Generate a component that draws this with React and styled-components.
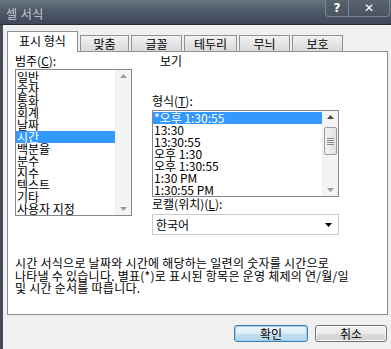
import styled, { createGlobalStyle } from 'styled-components';

const GlobalStyle = createGlobalStyle`
  html, body {
    margin: 0;
    padding: 0;
    background: #f0f0f0;
  }
  body {
    font-family: "Noto Sans CJK KR", "Liberation Sans", sans-serif;
    font-size: 12px;
    color: #000;
  }
`;

const Window = styled.div`
  width: 391px;
  height: 349px;
  display: flex;
  flex-direction: column;
  overflow: hidden;
  box-sizing: border-box;
`;

const TitleBar = styled.div`
  height: 25px;
  flex: none;
  display: flex;
  align-items: flex-start;
  justify-content: space-between;
  background: linear-gradient(180deg, #6a7483 0%, #4f5a69 45%, #3e4858 100%);
  border-bottom: 1px solid #262d37;
  box-sizing: border-box;
`;

const Title = styled.span`
  color: #c9cdd3;
  font-size: 12px;
  line-height: 14px;
  padding: 7px 0 0 6px;
  letter-spacing: 0.5px;
`;

const CaptionButtons = styled.div`
  display: flex;
  margin-right: 1px;
  border: 1px solid #7b8491;
  border-top: none;
  border-radius: 0 0 4px 4px;
  height: 16px;
  background: linear-gradient(180deg, #5a6471, #4a535f);
`;

const CaptionButton = styled.div`
  width: ${(p) => p.$w}px;
  display: flex;
  align-items: center;
  justify-content: center;
  color: #fff;
  font-family: "DejaVu Sans", sans-serif;
  font-weight: bold;
  font-size: ${(p) => p.$size}px;
  & + & {
    border-left: 1px solid #7b8491;
  }
`;

const Frame = styled.div`
  flex: 1;
  display: flex;
  border-left: 3px solid #454c57;
`;

const Body = styled.div`
  flex: 1;
  display: flex;
  flex-direction: column;
  padding: 7px 3px 0 4px;
  background: #f0f0f0;
`;

const TabRow = styled.div`
  display: flex;
  align-items: flex-end;
  gap: 2px;
  height: 20px;
  position: relative;
  z-index: 1;
  margin-bottom: -1px;
`;

const Tab = styled.div`
  width: ${(p) => p.$w}px;
  height: ${(p) => (p.$active ? 21 : 17)}px;
  box-sizing: border-box;
  border: 1px solid #8d9299;
  border-bottom: ${(p) => (p.$active ? 'none' : '1px solid #8d9299')};
  background: ${(p) => (p.$active ? '#fff' : 'linear-gradient(180deg, #f2f2f2 0%, #e6e6e6 50%, #d9d9d9 100%)')};
  display: flex;
  justify-content: center;
  align-items: ${(p) => (p.$active ? 'flex-start' : 'center')};
  padding-top: ${(p) => (p.$active ? 2 : 0)}px;
  line-height: 14px;
  font-size: 12px;
`;

const Panel = styled.div`
  height: 264px;
  box-sizing: border-box;
  border: 1px solid #898c95;
  background: #fff;
  padding: 2px 8px 0 7px;
  display: flex;
  flex-direction: column;
`;

const TopSection = styled.div`
  display: flex;
  gap: 20px;
`;

const Column = styled.div`
  width: ${(p) => p.$w}px;
  display: flex;
  flex-direction: column;
`;

const Label = styled.div`
  line-height: 14px;
  height: 14px;
  padding-left: ${(p) => p.$indent || 0}px;
  margin-bottom: ${(p) => p.$mb || 0}px;
  white-space: nowrap;
  u {
    text-decoration: underline;
  }
`;

const Spacer = styled.div`
  height: ${(p) => p.$h}px;
`;

const ListBox = styled.div`
  height: ${(p) => p.$h}px;
  box-sizing: border-box;
  border: 1px solid #828790;
  display: flex;
  background: #fff;
`;

const Items = styled.div`
  flex: 1;
  padding-top: 1px;
`;

const Item = styled.div`
  height: 12px;
  line-height: 12px;
  padding-left: 1px;
  white-space: nowrap;
  background: ${(p) => (p.$selected ? '#3399ff' : 'transparent')};
  color: ${(p) => (p.$selected ? '#fff' : '#000')};
`;

const ScrollBar = styled.div`
  width: 16px;
  background: #f4f4f4;
  border-left: 1px solid #f0f0f0;
  display: flex;
  flex-direction: column;
  align-items: center;
  justify-content: space-between;
  padding: 4px 0;
  box-sizing: border-box;
  position: relative;
`;

const Thumb = styled.div`
  position: absolute;
  left: 1px;
  top: ${(p) => p.$top}px;
  width: 13px;
  height: ${(p) => p.$h}px;
  box-sizing: border-box;
  border: 1px solid #9a9a9a;
  border-radius: 2px;
  background: linear-gradient(90deg, #f3f3f3, #e2e2e2);
  display: flex;
  flex-direction: column;
  align-items: center;
  justify-content: center;
  gap: 1px;
`;

const Grip = styled.div`
  width: 7px;
  height: 1px;
  background: #8a8a8a;
`;

const Select = styled.div`
  height: 21px;
  box-sizing: border-box;
  border: 1px solid #c9cbd0;
  display: flex;
  align-items: center;
  justify-content: space-between;
  padding: 0 6px 0 3px;
`;

const Description = styled.p`
  margin: 22px 0 0 0;
  line-height: 12.5px;
  letter-spacing: 0.25px;
  white-space: nowrap;
`;

const ButtonRow = styled.div`
  display: flex;
  justify-content: flex-end;
  gap: 7px;
  padding: 10px 1px 0 0;
`;

const Button = styled.div`
  width: ${(p) => p.$w}px;
  height: 17px;
  box-sizing: border-box;
  border: 1px solid ${(p) => (p.$default ? '#3c7fb1' : '#707070')};
  border-radius: 3px;
  background: ${(p) => (p.$default
    ? 'linear-gradient(180deg, #eef6fb 0%, #dcecf6 50%, #c3dfef 51%, #b5d7ec 100%)'
    : 'linear-gradient(180deg, #f2f2f2 0%, #ebebeb 50%, #dddddd 51%, #cfcfcf 100%)')};
  box-shadow: inset 0 0 0 1px ${(p) => (p.$default ? '#9fd0ec' : '#fcfcfc')};
  display: flex;
  align-items: center;
  justify-content: center;
  line-height: 14px;
`;

function Arrow({ down, color = '#4d4d4d', w = 7, h = 4 }) {
  return (
    <svg width={w} height={h} viewBox="0 0 7 4">
      <path d={down ? 'M0 0 L7 0 L3.5 4 Z' : 'M0 4 L7 4 L3.5 0 Z'} fill={color} />
    </svg>
  );
}

const categories = ['일반', '숫자', '통화', '회계', '날짜', '시간', '백분율', '분수', '지수', '텍스트', '기타', '사용자 지정'];
const formats = ['*오후 1:30:55', '13:30', '13:30:55', '오후 1:30', '오후 1:30:55', '1:30 PM', '1:30:55 PM'];
const tabs = [
  { name: '표시 형식', w: 71 },
  { name: '맞춤', w: 49 },
  { name: '글꼴', w: 51 },
  { name: '테두리', w: 53 },
  { name: '무늬', w: 51 },
  { name: '보호', w: 51 },
];

export default function App() {
  return (
    <>
      <GlobalStyle />
      <Window>
        <TitleBar>
          <Title>셀 서식</Title>
          <CaptionButtons>
            <CaptionButton $w={22} $size={12}>?</CaptionButton>
            <CaptionButton $w={40} $size={12}>✕</CaptionButton>
          </CaptionButtons>
        </TitleBar>
        <Frame>
          <Body>
            <TabRow>
              {tabs.map((t, i) => (
                <Tab key={t.name} $w={t.w} $active={i === 0}>{t.name}</Tab>
              ))}
            </TabRow>
            <Panel>
              <TopSection>
                <Column $w={117}>
                  <Label $mb={1}>범주(<u>C</u>):</Label>
                  <ListBox $h={147}>
                    <Items>
                      {categories.map((c) => (
                        <Item key={c} $selected={c === '시간'}>{c}</Item>
                      ))}
                    </Items>
                    <ScrollBar>
                      <Arrow color="#9a9a9a" />
                      <Arrow down color="#9a9a9a" />
                    </ScrollBar>
                  </ListBox>
                </Column>
                <Column $w={187}>
                  <Label $indent={8}>보기</Label>
                  <Spacer $h={26} />
                  <Label $mb={2}>형식(<u>T</u>):</Label>
                  <ListBox $h={87}>
                    <Items>
                      {formats.map((f, i) => (
                        <Item key={f} $selected={i === 0}>{f}</Item>
                      ))}
                    </Items>
                    <ScrollBar>
                      <Arrow />
                      <Thumb $top={16} $h={28}>
                        <Grip />
                        <Grip />
                        <Grip />
                        <Grip />
                      </Thumb>
                      <Arrow down color="#9a9a9a" />
                    </ScrollBar>
                  </ListBox>
                  <Label $mb={3}>로캘(위치)(<u>L</u>):</Label>
                  <Select>
                    <span>한국어</span>
                    <Arrow down color="#000" />
                  </Select>
                </Column>
              </TopSection>
              <Description>
                시간 서식으로 날짜와 시간에 해당하는 일련의 숫자를 시간으로
                <br />
                나타낼 수 있습니다. 별표(*)로 표시된 항목은 운영 체제의 연/월/일
                <br />
                및 시간 순서를 따릅니다.
              </Description>
            </Panel>
            <ButtonRow>
              <Button $default $w={74}>확인</Button>
              <Button $w={72}>취소</Button>
            </ButtonRow>
          </Body>
        </Frame>
      </Window>
    </>
  );
}
